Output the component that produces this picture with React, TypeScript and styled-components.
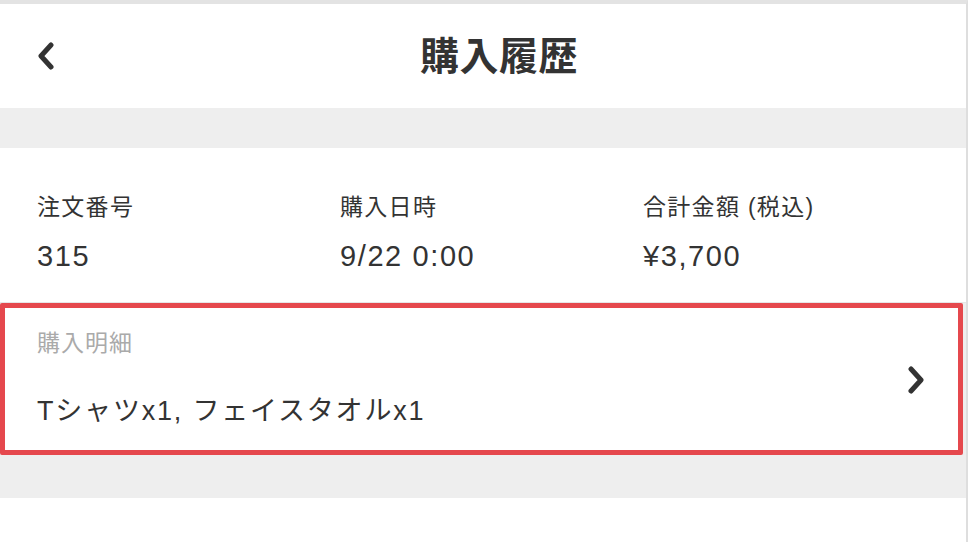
import React, { FunctionComponent } from 'react'
import styled, { createGlobalStyle } from 'styled-components'

const GlobalStyle = createGlobalStyle`
    html, body {
        margin: 0;
        padding: 0;
        background: #fff;
    }

    body {
        font-family: "Liberation Sans", "Noto Sans CJK JP", sans-serif;
        color: #333;
    }

    * {
        box-sizing: border-box;
    }
`

const Page = styled.div`
    width: 968px;
    height: 542px;

    border-top: 4px solid #e3e3e3;
    border-right: 2px solid #dedede;

    display: flex;
    flex-direction: column;

    overflow: hidden;

    background-color: #eeeeee;
`

const Header = styled.header`
    height: 104px;

    padding-left: 36px;

    display: flex;
    align-items: center;

    background-color: #fff;
`

const BackButton = styled.button`
    width: 20px;
    height: 30px;

    padding: 0;
    border: none;

    display: flex;
    align-items: center;
    justify-content: center;

    background: transparent;
    cursor: pointer;
`

const Title = styled.h1`
    flex: 1;
    margin: 0;
    padding-right: 24px;

    font-size: 39px;
    font-weight: bold;
    line-height: 1;
    letter-spacing: 0.5px;
    text-align: center;
    color: #333;
`

const Summary = styled.section`
    margin-top: 40px;
    padding: 48px 20px 31px 37px;

    border-bottom: 1px solid #e6e6e6;

    display: grid;
    grid-template-columns: repeat(3, 303px);

    background-color: #fff;
`

const Field = styled.div`
    display: flex;
    flex-direction: column;
`

const FieldLabel = styled.div`
    font-size: 23px;
    line-height: 1;
    letter-spacing: 1.3px;
    color: #333;
`

const FieldValue = styled.div`
    margin-top: 23px;

    font-size: 29px;
    line-height: 1;
    letter-spacing: 1.6px;
    color: #333;
`

const DetailRow = styled.a`
    height: 152px;
    margin-right: 3px;

    padding: 24px 33px 0 32px;

    border: 5px solid #e5484d;
    border-radius: 2px;

    display: flex;
    align-items: center;

    text-decoration: none;
    background-color: #fff;
    cursor: pointer;
`

const DetailBody = styled.div`
    flex: 1;
    align-self: flex-start;

    display: flex;
    flex-direction: column;
`

const DetailLabel = styled.div`
    font-size: 23px;
    line-height: 1;
    letter-spacing: 1px;
    color: #aaa;
`

const DetailText = styled.div`
    margin-top: 43px;

    font-size: 27px;
    line-height: 1;
    letter-spacing: 1.8px;
    color: #333;
`

const Chevron = styled.span`
    margin-top: -22px;

    display: flex;
`

const Footer = styled.div`
    flex: 1;
    margin-top: 43px;

    background-color: #fff;
`

const ArrowIcon: FunctionComponent<{ dir: 'left' | 'right' }> = ({ dir }) => (
    <svg width="18" height="28" viewBox="0 0 18 28">
        <path
            d={dir === 'left' ? 'M14 3 L4 14 L14 25' : 'M4 3 L14 14 L4 25'}
            fill="none"
            stroke="#333"
            strokeWidth="5"
            strokeLinecap="round"
            strokeLinejoin="round"
        />
    </svg>
)

const fields = [
    { label: '注文番号', value: '315' },
    { label: '購入日時', value: '9/22 0:00' },
    { label: '合計金額 (税込)', value: '¥3,700' },
]

const App: FunctionComponent<{}> = () => {
    return (
        <>
            <GlobalStyle />
            <Page>
                <Header>
                    <BackButton aria-label="戻る">
                        <ArrowIcon dir="left" />
                    </BackButton>
                    <Title>購入履歴</Title>
                </Header>

                <Summary>
                    {fields.map(f => (
                        <Field key={f.label}>
                            <FieldLabel>{f.label}</FieldLabel>
                            <FieldValue>{f.value}</FieldValue>
                        </Field>
                    ))}
                </Summary>

                <DetailRow>
                    <DetailBody>
                        <DetailLabel>購入明細</DetailLabel>
                        <DetailText>Tシャツx1, フェイスタオルx1</DetailText>
                    </DetailBody>
                    <Chevron>
                        <ArrowIcon dir="right" />
                    </Chevron>
                </DetailRow>

                <Footer />
            </Page>
        </>
    )
}

export default App
